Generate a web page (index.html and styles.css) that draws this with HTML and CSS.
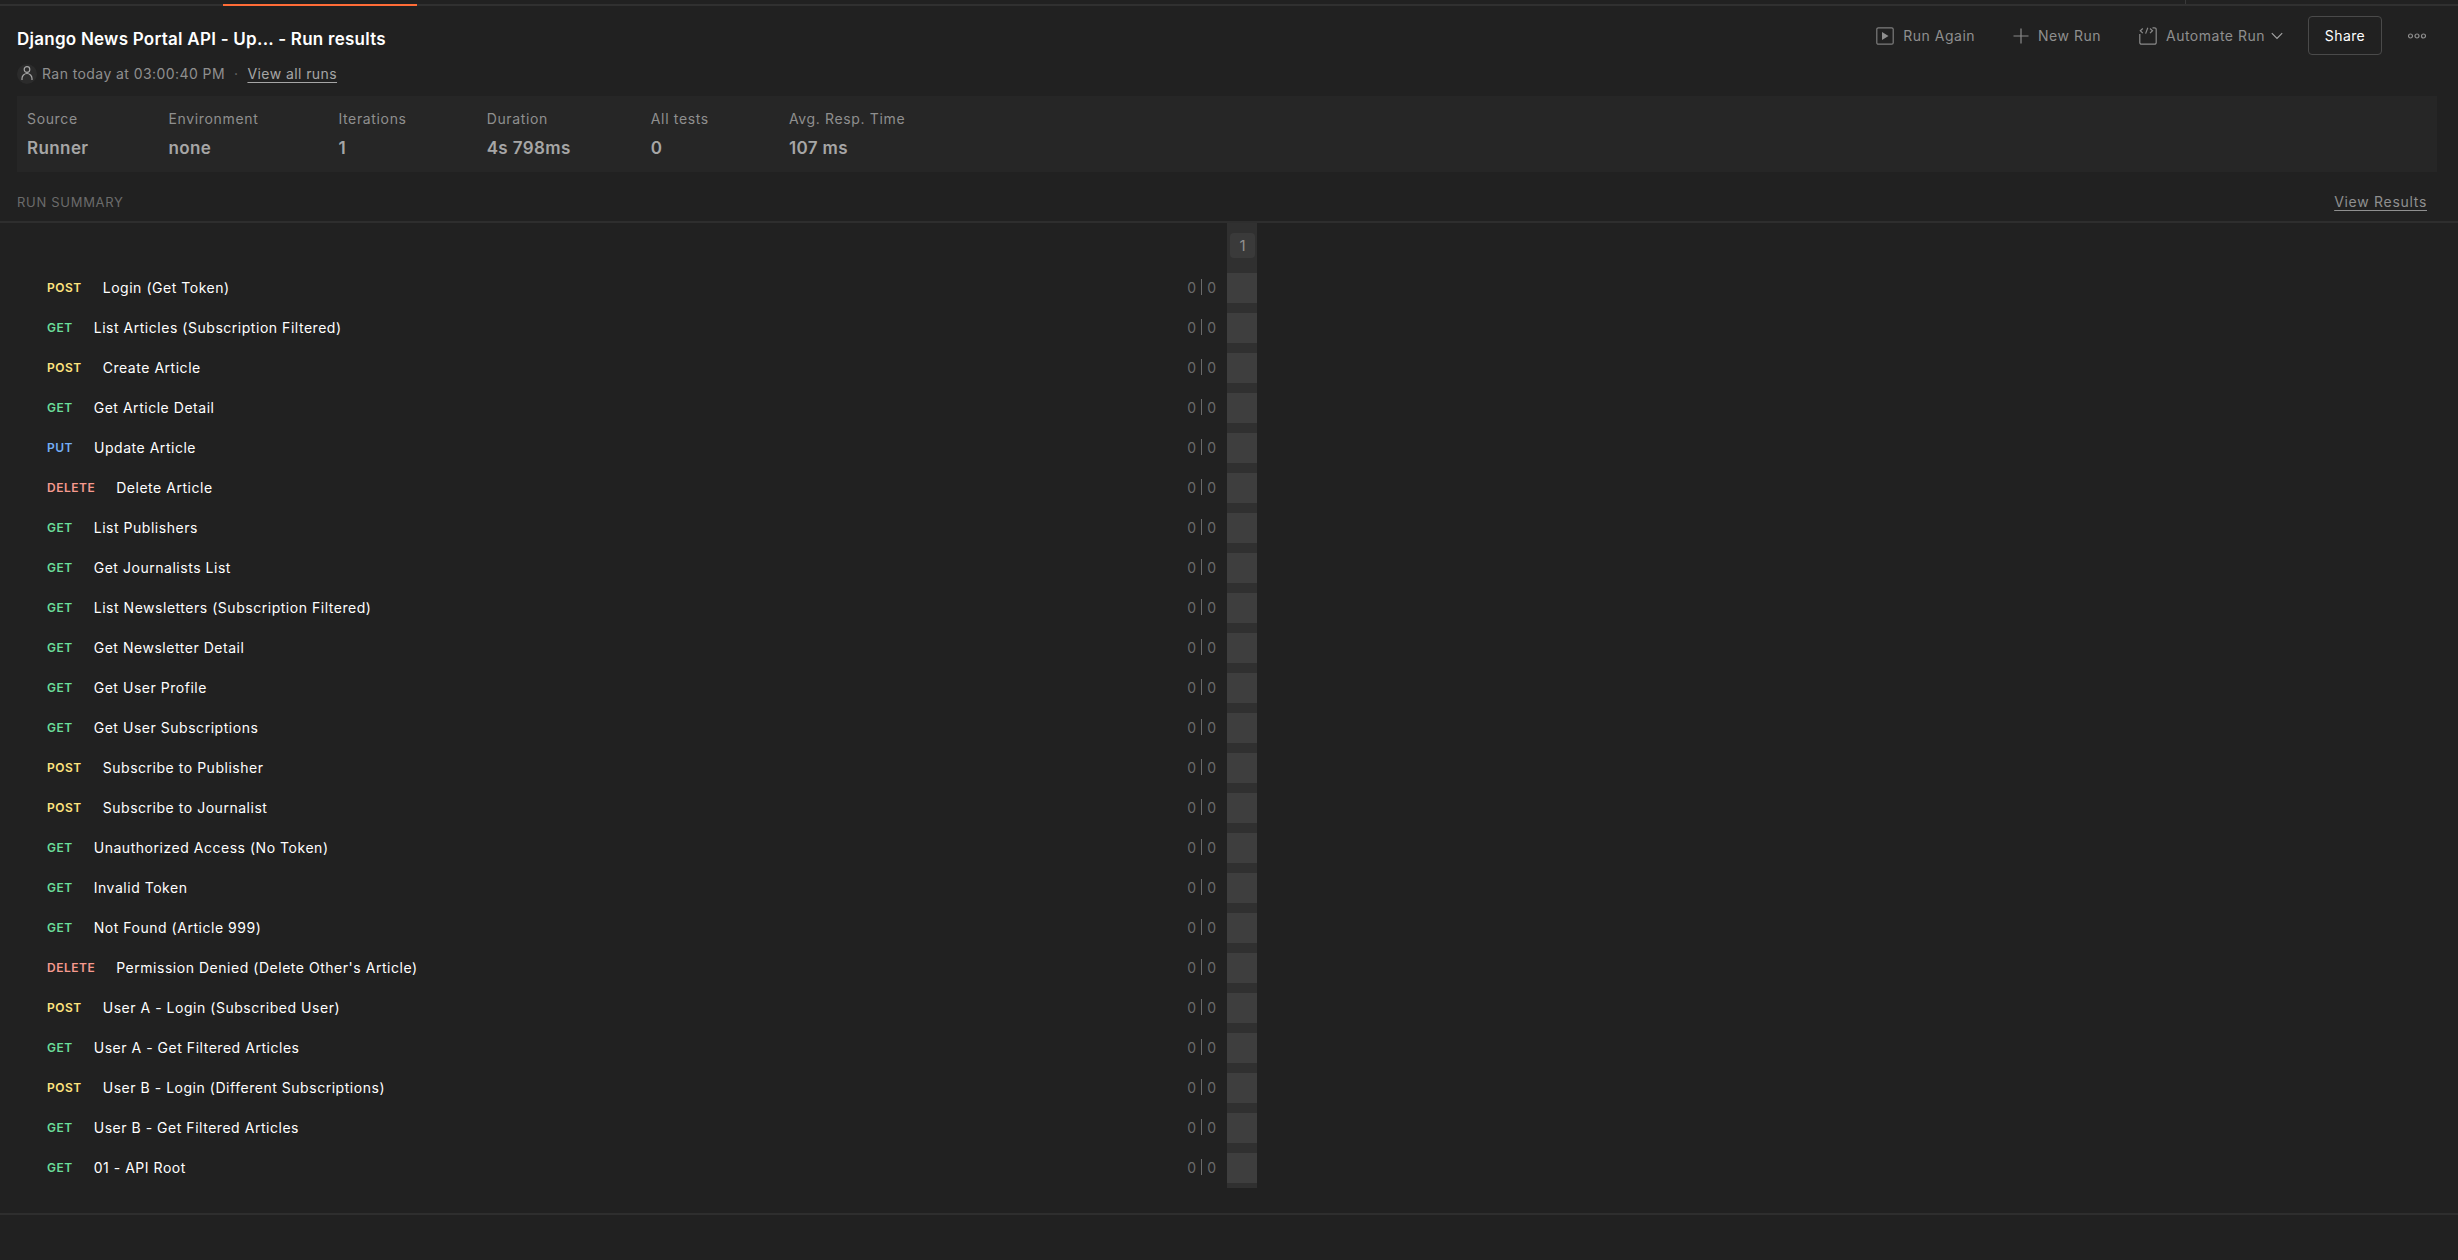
FILE: index.html
```html
<!DOCTYPE html>
<html lang="en">
<head>
<meta charset="utf-8">
<title>Run results</title>
<link rel="stylesheet" href="styles.css">
</head>
<body>
<div class="topbar"><div class="tab-active"></div><div class="tab-sep"></div></div>
<header class="head">
  <div class="head-left">
    <h1 class="title">Django News Portal API - Up... - Run results</h1>
    <div class="meta">
      <span class="avatar"><svg width="20" height="20" viewBox="0 0 20 20" fill="none" stroke="#a6a6a6" stroke-width="1.200"><circle cx="10" cy="5.500" r="2.800"/><path d="M5 16v-1.500a5 5 0 0 1 10 0V16"/></svg></span>
      <span>Ran today at 03:00:40 PM</span><span class="dot">·</span><a class="link">View all runs</a>
    </div>
  </div>
  <div class="actions">
    <div class="action">
      <svg width="18" height="18" viewBox="0 0 18 18" fill="none" stroke="#7d7d7d" stroke-width="1.200"><rect x="0.800" y="0.800" width="16.400" height="16.400" rx="1.500"/><path d="M6 5v8l6.500-4z" fill="#8f8f8f" stroke="none"/></svg>
      <span>Run Again</span>
    </div>
    <div class="action">
      <svg width="16" height="16" viewBox="0 0 16 16" fill="none" stroke="#8a8a8a" stroke-width="1.200"><path d="M8 0.500v15M0.500 8h15"/></svg>
      <span>New Run</span>
    </div>
    <div class="action action-auto">
      <svg width="18" height="18" viewBox="0 0 18 18" fill="none" stroke="#8a8a8a" stroke-width="1.200"><path d="M0.800 7v8.500a1.700 1.700 0 0 0 1.700 1.700h13a1.700 1.700 0 0 0 1.700-1.700V2.500A1.700 1.700 0 0 0 15.500 0.800H13.500"/><path d="M3.800 1.500 1.300 3.800l2.500 2.300M8.800 0.800 6.600 6.600M11 1.500l2.500 2.300L11 6.100"/></svg>
      <span>Automate Run</span>
      <svg class="chev" width="12" height="12" viewBox="0 0 12 12" fill="none" stroke="#a6a6a6" stroke-width="1.100"><path d="M0.800 3.200 6 8.500l5.200-5.300"/></svg>
    </div>
    <button class="share">Share</button>
    <svg class="more" width="18" height="6" viewBox="0 0 18 6" fill="none" stroke="#8f8f8f" stroke-width="1.200"><circle cx="2.500" cy="3" r="2"/><circle cx="9" cy="3" r="2"/><circle cx="15.500" cy="3" r="2"/></svg>
  </div>
</header>
<section class="stats">
  <div class="stat"><div class="stat-label">Source</div><div class="stat-value">Runner</div></div>
  <div class="stat"><div class="stat-label">Environment</div><div class="stat-value">none</div></div>
  <div class="stat"><div class="stat-label">Iterations</div><div class="stat-value">1</div></div>
  <div class="stat"><div class="stat-label">Duration</div><div class="stat-value">4s 798ms</div></div>
  <div class="stat"><div class="stat-label">All tests</div><div class="stat-value">0</div></div>
  <div class="stat"><div class="stat-label">Avg. Resp. Time</div><div class="stat-value">107 ms</div></div>
</section>
<div class="summary-head"><span class="summary-title">RUN SUMMARY</span><a class="link view-results">View Results</a></div>
<section class="summary">
  <div class="names">
    <div class="row"><span class="m post">POST</span><span class="name">Login (Get Token)</span><span class="count">0<i></i>0</span></div>
    <div class="row"><span class="m get">GET</span><span class="name">List Articles (Subscription Filtered)</span><span class="count">0<i></i>0</span></div>
    <div class="row"><span class="m post">POST</span><span class="name">Create Article</span><span class="count">0<i></i>0</span></div>
    <div class="row"><span class="m get">GET</span><span class="name">Get Article Detail</span><span class="count">0<i></i>0</span></div>
    <div class="row"><span class="m put">PUT</span><span class="name">Update Article</span><span class="count">0<i></i>0</span></div>
    <div class="row"><span class="m del">DELETE</span><span class="name">Delete Article</span><span class="count">0<i></i>0</span></div>
    <div class="row"><span class="m get">GET</span><span class="name">List Publishers</span><span class="count">0<i></i>0</span></div>
    <div class="row"><span class="m get">GET</span><span class="name">Get Journalists List</span><span class="count">0<i></i>0</span></div>
    <div class="row"><span class="m get">GET</span><span class="name">List Newsletters (Subscription Filtered)</span><span class="count">0<i></i>0</span></div>
    <div class="row"><span class="m get">GET</span><span class="name">Get Newsletter Detail</span><span class="count">0<i></i>0</span></div>
    <div class="row"><span class="m get">GET</span><span class="name">Get User Profile</span><span class="count">0<i></i>0</span></div>
    <div class="row"><span class="m get">GET</span><span class="name">Get User Subscriptions</span><span class="count">0<i></i>0</span></div>
    <div class="row"><span class="m post">POST</span><span class="name">Subscribe to Publisher</span><span class="count">0<i></i>0</span></div>
    <div class="row"><span class="m post">POST</span><span class="name">Subscribe to Journalist</span><span class="count">0<i></i>0</span></div>
    <div class="row"><span class="m get">GET</span><span class="name">Unauthorized Access (No Token)</span><span class="count">0<i></i>0</span></div>
    <div class="row"><span class="m get">GET</span><span class="name">Invalid Token</span><span class="count">0<i></i>0</span></div>
    <div class="row"><span class="m get">GET</span><span class="name">Not Found (Article 999)</span><span class="count">0<i></i>0</span></div>
    <div class="row"><span class="m del">DELETE</span><span class="name">Permission Denied (Delete Other's Article)</span><span class="count">0<i></i>0</span></div>
    <div class="row"><span class="m post">POST</span><span class="name">User A - Login (Subscribed User)</span><span class="count">0<i></i>0</span></div>
    <div class="row"><span class="m get">GET</span><span class="name">User A - Get Filtered Articles</span><span class="count">0<i></i>0</span></div>
    <div class="row"><span class="m post">POST</span><span class="name">User B - Login (Different Subscriptions)</span><span class="count">0<i></i>0</span></div>
    <div class="row"><span class="m get">GET</span><span class="name">User B - Get Filtered Articles</span><span class="count">0<i></i>0</span></div>
    <div class="row"><span class="m get">GET</span><span class="name">01 - API Root</span><span class="count">0<i></i>0</span></div>
  </div>
  <div class="iter">
    <div class="iter-chip">1</div>
    <div class="cell"></div><div class="cell"></div><div class="cell"></div><div class="cell"></div><div class="cell"></div><div class="cell"></div>
    <div class="cell"></div><div class="cell"></div><div class="cell"></div><div class="cell"></div><div class="cell"></div><div class="cell"></div>
    <div class="cell"></div><div class="cell"></div><div class="cell"></div><div class="cell"></div><div class="cell"></div><div class="cell"></div>
    <div class="cell"></div><div class="cell"></div><div class="cell"></div><div class="cell"></div><div class="cell"></div>
  </div>
</section>
<div class="bottom-rule"></div>
</body>
</html>
```
FILE: styles.css
```css
* { box-sizing: border-box; }
html, body { height: 100%; }
body {
  margin: 0;
  background: #212121;
  color: #a6a6a6;
  font-family: Inter, "Noto Sans", sans-serif;
  font-size: 14px;
  overflow: hidden;
}
.topbar {
  height: 6px;
  border-bottom: 2px solid #303030;
  position: relative;
}
.tab-active {
  position: absolute;
  left: 223px;
  width: 194px;
  top: 4px;
  height: 2px;
  background: #ff6c37;
}
.tab-sep {
  position: absolute;
  left: 2185px;
  top: 0;
  width: 1px;
  height: 4px;
  background: #3a3a3a;
}
.head {
  display: flex;
  justify-content: space-between;
  align-items: flex-start;
  padding: 10px 17px 0;
  height: 90px;
}
.title {
  margin: 0;
  font-size: 17px;
  line-height: 24px;
  font-weight: 600;
  letter-spacing: 0.25px;
  color: #ffffff;
  margin-top: 11px;
}
.meta {
  display: flex;
  align-items: center;
  margin-top: 13px;
  height: 20px;
  line-height: 20px;
  font-size: 14px;
  letter-spacing: 0.42px;
  color: #8f8f8f;
}
.avatar {
  width: 20px;
  height: 20px;
  border-radius: 50%;
  background: #2b2b2b;
  display: flex;
  align-items: center;
  justify-content: center;
  margin-right: 5px;
}
.dot { margin: 0 9px; color: #6b6b6b; }
.link {
  color: #a6a6a6;
  text-decoration: underline;
  text-underline-offset: 3px;
}
.actions {
  display: flex;
  align-items: center;
  height: 39px;
  margin-right: 15px;
}
.action {
  display: flex;
  align-items: center;
  gap: 9px;
  margin-right: 38px;
  font-size: 14px;
  letter-spacing: 0.5px;
  color: #8f8f8f;
}
.action-auto { margin-right: 25px; }
.chev { margin-left: -3px; }
.share {
  width: 74px;
  height: 39px;
  background: transparent;
  border: 1px solid #4a4a4a;
  border-radius: 4px;
  color: #ffffff;
  font: inherit;
  letter-spacing: 0.4px;
  padding: 0;
}
.more { margin-left: 26px; }
.stats {
  display: flex;
  gap: 80px;
  margin: 0 21px 0 17px;
  height: 76px;
  padding: 13px 10px 0;
  background: #262626;
}
.stat-label {
  font-size: 14px;
  line-height: 20px;
  letter-spacing: 0.65px;
  color: #8f8f8f;
}
.stat-value {
  margin-top: 9px;
  font-size: 17px;
  line-height: 20px;
  font-weight: 600;
  letter-spacing: 0.4px;
  color: #a6a6a6;
}
.summary-head {
  display: flex;
  justify-content: space-between;
  align-items: center;
  height: 51px;
  padding: 10px 31px 0 17px;
  border-bottom: 2px solid #2e2e2e;
}
.summary-title { font-size: 13px; letter-spacing: 0.7px; color: #6b6b6b; }
.view-results { font-size: 14px; letter-spacing: 0.7px; color: #8f8f8f; }
.summary {
  display: flex;
  height: 965px;
  align-items: flex-start;
}
.names {
  width: 1227px;
  padding: 49px 0 0 47px;
}
.row {
  display: flex;
  align-items: center;
  height: 30px;
  margin-bottom: 10px;
  padding-right: 11px;
}
.m {
  font-size: 12px;
  font-weight: 600;
  letter-spacing: 0.5px;
  margin-right: 21px;
}
.post { color: #ffe47e; }
.get { color: #6bdd9a; }
.put { color: #74aef6; }
.del { color: #f79a8e; }
.name { color: #ffffff; font-size: 14px; letter-spacing: 0.53px; flex: 1; }
.count {
  display: flex;
  align-items: center;
  gap: 5px;
  font-size: 14px;
  color: #6b6b6b;
}
.count i {
  display: block;
  width: 1px;
  height: 16px;
  background: #6b6b6b;
}
.iter {
  width: 30px;
  background: #303030;
  padding-bottom: 5px;
  display: flex;
  flex-direction: column;
  align-items: center;
  gap: 10px;
}
.iter-chip {
  width: 25px;
  height: 25px;
  margin: 10px 0 5px 3px;
  align-self: flex-start;
  border-radius: 4px;
  background: #3a3a3a;
  color: #8f8f8f;
  display: flex;
  align-items: center;
  justify-content: center;
  font-size: 15px;
}
.cell {
  width: 30px;
  height: 30px;
  background: #3e3e3e;
}
.bottom-rule {
  position: absolute;
  left: 0;
  right: 0;
  top: 1213px;
  height: 2px;
  background: #2e2e2e;
}
```
